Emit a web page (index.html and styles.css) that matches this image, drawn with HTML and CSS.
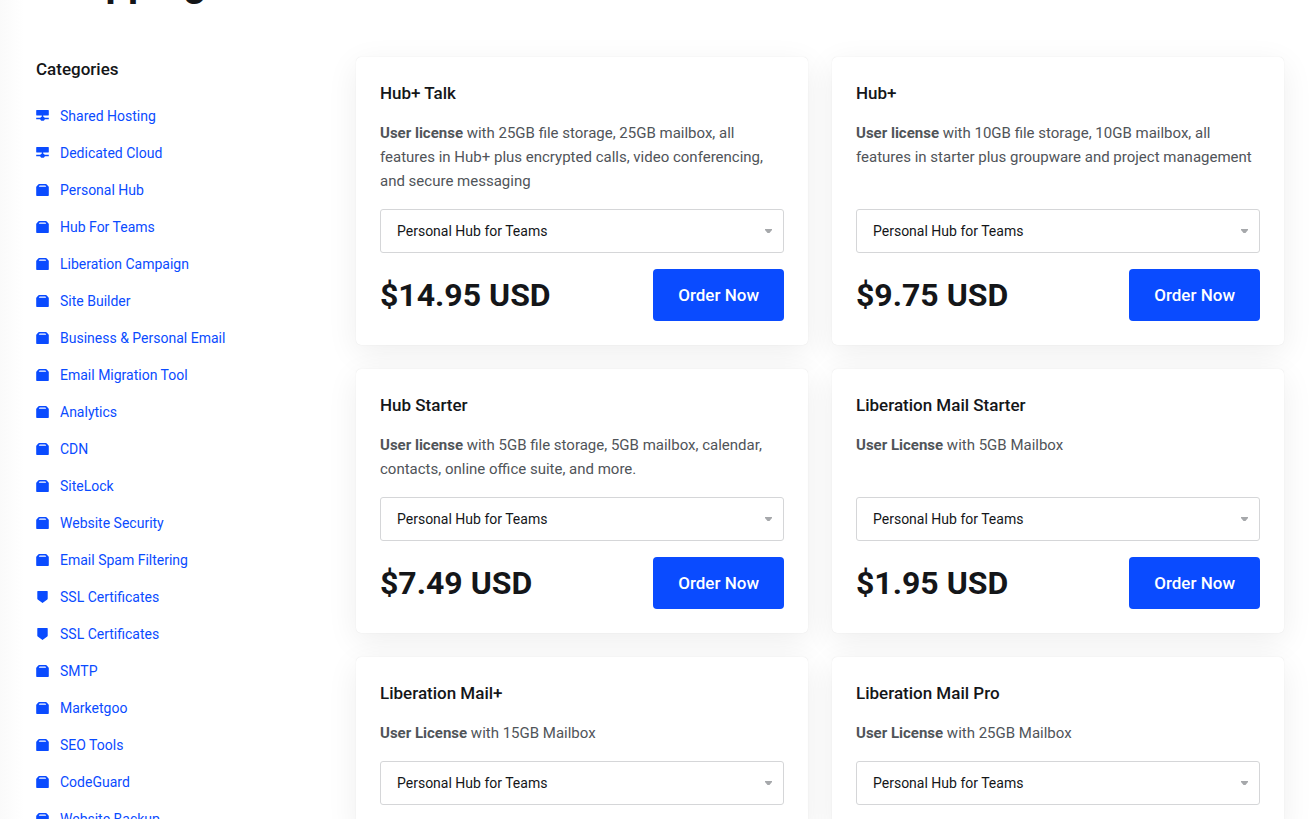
FILE: index.html
```
<!DOCTYPE html>
<html lang="en">
<head>
  <meta charset="UTF-8">
  <meta name="viewport" content="width=device-width, initial-scale=1">
  <title>Shopping Cart</title>
  <link rel="stylesheet" href="styles.css">
</head>
<body>
  <svg class="sprite" aria-hidden="true">
    <symbol id="icon-server" viewBox="0 0 13 13">
      <path d="M.6 0h11.800q.4 0 .4.4v4.700q0 .4-.4.4H.6q-.4 0-.4-.4V.4Q.2 0 .6 0zM5.800 5.500h1.400v1.500H5.800zM.2 7.700h4.300v1.500H.2zM8.500 7.700h4.300v1.500H8.500zM5.300 6.800h2.400l1 1v2l-1 1H5.300l-1-1v-2z"/>
    </symbol>
    <symbol id="icon-box" viewBox="0 0 13 13">
      <path fill-rule="evenodd" d="M3.200 0h6.600q.6 0 1 .5l1.700 1.900q.3.300.3.800v8.100q0 .7-.7.7H.9q-.7 0-.7-.7V3.200q0-.5.3-.8L2.200.5q.4-.5 1-.5zM3.600 1.500L2.800 2.700h7.400l-.8-1.200z"/>
    </symbol>
    <symbol id="icon-shield" viewBox="0 0 13 13">
      <path d="M1.700 0h9.600q.4 0 .4.400v7.200q0 .5-.4.800L6.500 12 1.700 8.400q-.4-.3-.4-.8V.4q0-.4.4-.4z"/>
    </symbol>
  </svg>

  <div class="page">
    <h1 class="page-title">Shopping Cart</h1>

    <div class="layout">
      <aside class="sidebar">
        <h2 class="sidebar-title">Categories</h2>
        <nav class="categories">
          <a href="#"><svg class="icon"><use href="#icon-server"/></svg>Shared Hosting</a>
          <a href="#"><svg class="icon"><use href="#icon-server"/></svg>Dedicated Cloud</a>
          <a href="#"><svg class="icon"><use href="#icon-box"/></svg>Personal Hub</a>
          <a href="#"><svg class="icon"><use href="#icon-box"/></svg>Hub For Teams</a>
          <a href="#"><svg class="icon"><use href="#icon-box"/></svg>Liberation Campaign</a>
          <a href="#"><svg class="icon"><use href="#icon-box"/></svg>Site Builder</a>
          <a href="#"><svg class="icon"><use href="#icon-box"/></svg>Business &amp; Personal Email</a>
          <a href="#"><svg class="icon"><use href="#icon-box"/></svg>Email Migration Tool</a>
          <a href="#"><svg class="icon"><use href="#icon-box"/></svg>Analytics</a>
          <a href="#"><svg class="icon"><use href="#icon-box"/></svg>CDN</a>
          <a href="#"><svg class="icon"><use href="#icon-box"/></svg>SiteLock</a>
          <a href="#"><svg class="icon"><use href="#icon-box"/></svg>Website Security</a>
          <a href="#"><svg class="icon"><use href="#icon-box"/></svg>Email Spam Filtering</a>
          <a href="#"><svg class="icon"><use href="#icon-shield"/></svg>SSL Certificates</a>
          <a href="#"><svg class="icon"><use href="#icon-shield"/></svg>SSL Certificates</a>
          <a href="#"><svg class="icon"><use href="#icon-box"/></svg>SMTP</a>
          <a href="#"><svg class="icon"><use href="#icon-box"/></svg>Marketgoo</a>
          <a href="#"><svg class="icon"><use href="#icon-box"/></svg>SEO Tools</a>
          <a href="#"><svg class="icon"><use href="#icon-box"/></svg>CodeGuard</a>
          <a href="#"><svg class="icon"><use href="#icon-box"/></svg>Website Backup</a>
        </nav>
      </aside>

      <main class="products">
        <form class="card">
          <h3 class="card-title">Hub+ Talk</h3>
          <p class="card-text"><strong>User license</strong> with 25GB file storage, 25GB mailbox, all features in Hub+ plus encrypted calls, video conferencing, and secure messaging</p>
          <select class="card-select" aria-label="Hub+ Talk plan">
            <option>Personal Hub for Teams</option>
          </select>
          <div class="card-footer">
            <span class="price">$14.95 USD</span>
            <button type="button" class="btn">Order Now</button>
          </div>
        </form>

        <form class="card">
          <h3 class="card-title">Hub+</h3>
          <p class="card-text"><strong>User license</strong> with 10GB file storage, 10GB mailbox, all features in starter plus groupware and project management</p>
          <select class="card-select" aria-label="Hub+ plan">
            <option>Personal Hub for Teams</option>
          </select>
          <div class="card-footer">
            <span class="price">$9.75 USD</span>
            <button type="button" class="btn">Order Now</button>
          </div>
        </form>

        <form class="card">
          <h3 class="card-title">Hub Starter</h3>
          <p class="card-text"><strong>User license</strong> with 5GB file storage, 5GB mailbox, calendar, contacts, online office suite, and more.</p>
          <select class="card-select" aria-label="Hub Starter plan">
            <option>Personal Hub for Teams</option>
          </select>
          <div class="card-footer">
            <span class="price">$7.49 USD</span>
            <button type="button" class="btn">Order Now</button>
          </div>
        </form>

        <form class="card">
          <h3 class="card-title">Liberation Mail Starter</h3>
          <p class="card-text"><strong>User License</strong> with 5GB Mailbox</p>
          <select class="card-select" aria-label="Liberation Mail Starter plan">
            <option>Personal Hub for Teams</option>
          </select>
          <div class="card-footer">
            <span class="price">$1.95 USD</span>
            <button type="button" class="btn">Order Now</button>
          </div>
        </form>

        <form class="card">
          <h3 class="card-title">Liberation Mail+</h3>
          <p class="card-text"><strong>User License</strong> with 15GB Mailbox</p>
          <select class="card-select" aria-label="Liberation Mail+ plan">
            <option>Personal Hub for Teams</option>
          </select>
        </form>

        <form class="card">
          <h3 class="card-title">Liberation Mail Pro</h3>
          <p class="card-text"><strong>User License</strong> with 25GB Mailbox</p>
          <select class="card-select" aria-label="Liberation Mail Pro plan">
            <option>Personal Hub for Teams</option>
          </select>
        </form>
      </main>
    </div>
  </div>
</body>
</html>
```
FILE: styles.css
```
* { box-sizing: border-box; }
body {
  margin: 0;
  height: 100vh;
  overflow: hidden;
  font-family: Roboto, sans-serif;
  font-size: 15px;
  line-height: 24px;
  color: #505459;
  background: #fff;
}
h1, h2, h3, p {
  margin: 0;
}
.sprite {
  display: none;
}

.page {
  padding: 0 32px 0 36px;
  background: linear-gradient(to right, #fafafa, #fff 24px);
}
.page-title {
  margin-top: -41px;
  margin-bottom: 50px;
  font-size: 40px;
  line-height: 48px;
  font-weight: 700;
  color: #141619;
}
.layout {
  display: flex;
  gap: 24px;
}

/* Sidebar */
.sidebar {
  flex: 0 0 296px;
}
.sidebar-title {
  margin-bottom: 17px;
  font-size: 17px;
  font-weight: 500;
  color: #141619;
}
.categories {
  display: flex;
  flex-direction: column;
}
.categories a {
  display: flex;
  align-items: center;
  gap: 11px;
  font-size: 14px;
  line-height: 37px;
  color: #0a4bff;
  text-decoration: none;
}
.categories a:hover {
  text-decoration: underline;
}
.icon {
  width: 13px;
  height: 13px;
  fill: #0a4bff;
}

/* Product cards */
.products {
  flex: 1;
  display: grid;
  grid-template-columns: repeat(2, 1fr);
  align-content: start;
  gap: 24px;
}
.card {
  display: flex;
  flex-direction: column;
  gap: 16px;
  padding: 24px;
  background: #fff;
  border-radius: 5px;
  box-shadow: 0 0 1px rgba(0, 0, 0, 0.12), 0 8px 32px rgba(0, 0, 0, 0.07);
}
.card-title {
  font-size: 17px;
  font-weight: 500;
  color: #141619;
}
.card-text {
  flex: 1;
}
.card-text strong {
  font-weight: 700;
}
.card-select {
  width: 100%;
  height: 44px;
  padding: 0 16px;
  font: inherit;
  font-size: 14px;
  color: #141619;
  appearance: none;
  background: #fff url("data:image/svg+xml,%3Csvg xmlns='http://www.w3.org/2000/svg' width='7' height='4'%3E%3Cpath d='M0 0h7v1L4.500 4h-2L0 1z' fill='%23a6a8ab'/%3E%3C/svg%3E") no-repeat right 11px center;
  border: 1px solid #d5d6d8;
  border-radius: 3px;
}
.card-footer {
  display: flex;
  align-items: center;
  justify-content: space-between;
}
.price {
  font-size: 32px;
  line-height: 40px;
  font-weight: 700;
  color: #141619;
}
.btn {
  padding: 14px 25px;
  font: inherit;
  font-size: 17px;
  font-weight: 500;
  color: #fff;
  background: #0a4bff;
  border: none;
  border-radius: 4px;
  cursor: pointer;
}
.btn:hover {
  background: #003ce0;
}
```
